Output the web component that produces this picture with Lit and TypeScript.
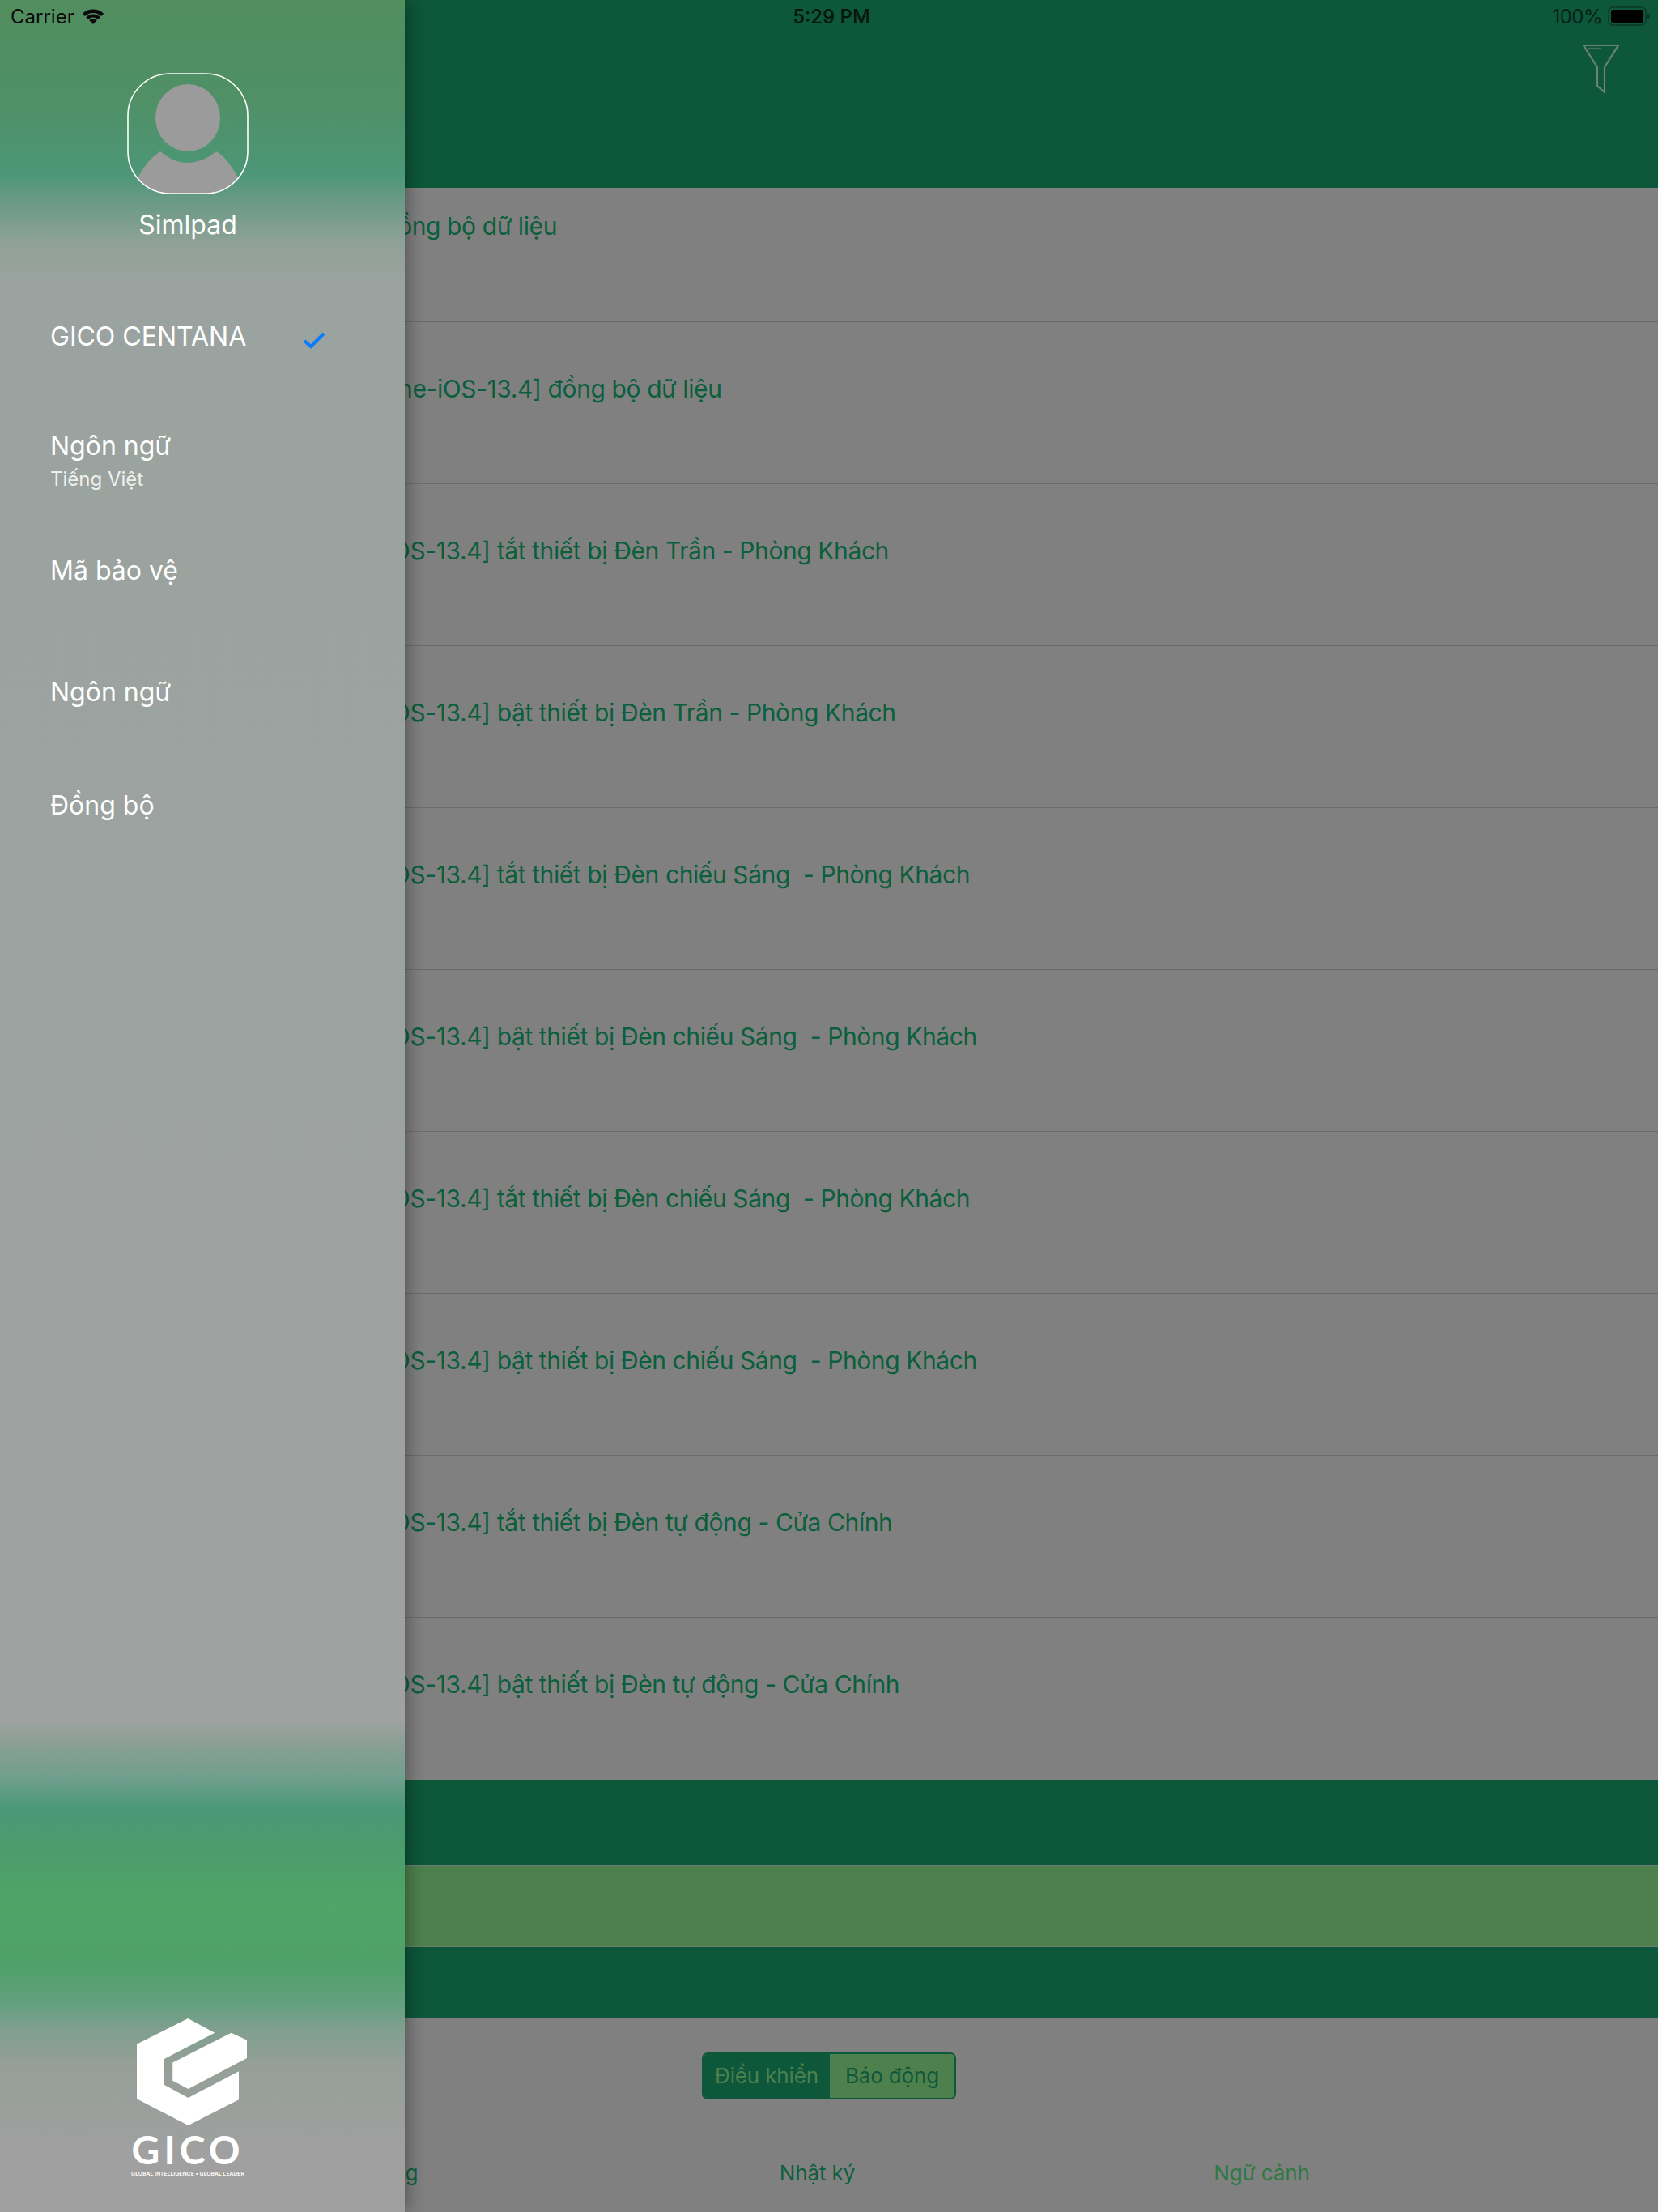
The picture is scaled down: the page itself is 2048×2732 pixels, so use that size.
import { LitElement, html, css } from "lit";
import { customElement } from "lit/decorators.js";

const ROWS: string[] = [
  "[iPhone-iOS-13.4] đồng bộ dữ liệu",
  "[iPad-iOS-13.4] tắt thiết bị Đèn Trần - Phòng Khách",
  "[iPad-iOS-13.4] bật thiết bị Đèn Trần - Phòng Khách",
  "[iPad-iOS-13.4] tắt thiết bị Đèn chiếu Sáng  - Phòng Khách",
  "[iPad-iOS-13.4] bật thiết bị Đèn chiếu Sáng  - Phòng Khách",
  "[iPad-iOS-13.4] tắt thiết bị Đèn chiếu Sáng  - Phòng Khách",
  "[iPad-iOS-13.4] bật thiết bị Đèn chiếu Sáng  - Phòng Khách",
  "[iPad-iOS-13.4] tắt thiết bị Đèn tự động - Cửa Chính",
  "[iPad-iOS-13.4] bật thiết bị Đèn tự động - Cửa Chính",
];

@customElement("app-root")
export class AppRoot extends LitElement {
  static styles = css`
    :host {
      display: block;
      position: relative;
      width: 2048px;
      height: 2732px;
      overflow: hidden;
      background: #808080;
      font-family: Inter, "Noto Sans", sans-serif;
    }
    .main {
      display: flex;
      flex-direction: column;
      height: 2732px;
    }
    .header {
      height: 232px;
      flex: none;
      background: #0d573a;
      display: flex;
      justify-content: flex-end;
      padding: 54px 47px 0 0;
      box-sizing: border-box;
    }
    .filter {
      width: 46px;
      height: 62px;
    }
    .row {
      height: 200px;
      flex: none;
      box-sizing: border-box;
      border-bottom: 1.5px solid #6b6b6b;
      padding: 64px 0 0 393px;
      font-size: 30px;
      letter-spacing: -0.4px;
      line-height: 36px;
      color: #0b5f3d;
      white-space: pre;
    }
    .row.first {
      height: 166px;
      padding: 29px 0 0 384px;
    }
    .row.wide {
      padding-left: 421px;
    }
    .row.last {
      border-bottom: none;
    }
    .bar {
      flex: none;
      background: #0d573a;
    }
    .bar.a {
      height: 106px;
      border-bottom: 1px solid #6d7d72;
    }
    .bar.b {
      height: 99px;
      background: #4e804e;
      border-bottom: 1px solid #6d7d72;
    }
    .bar.c {
      height: 88px;
    }
    .controls {
      display: flex;
      justify-content: center;
      padding: 42px 0 0 0;
      height: 58px;
      flex: none;
    }
    .segment {
      display: flex;
      width: 314px;
      height: 58px;
      box-sizing: border-box;
      border: 2px solid #0d573a;
      border-radius: 7px;
      overflow: hidden;
      font-size: 26px;
      letter-spacing: -0.15px;
    }
    .segment div {
      display: flex;
      align-items: center;
      justify-content: center;
      padding-bottom: 2px;
    }
    .seg-on {
      width: 156px;
      background: #0d573a;
      color: #4e804e;
    }
    .seg-off {
      flex: 1;
      background: #4e804e;
      color: #0d573a;
    }
    .tabs {
      display: grid;
      grid-template-columns: repeat(3, 549px);
      padding: 73px 0 0 186px;
      font-size: 26px;
      letter-spacing: -0.1px;
      line-height: 36px;
      text-align: center;
    }
    .tab1 {
      color: #0f6040;
    }
    .tab3 {
      color: #2f7a40;
    }
    .drawer {
      position: absolute;
      left: 0;
      top: 0;
      width: 500px;
      height: 2732px;
      box-shadow: 0 0 24px rgba(0, 0, 0, 0.45);
      background: linear-gradient(
        180deg,
        #528e5e 0,
        #4f9067 130px,
        #4c9777 215px,
        #6b9a86 250px,
        #8fa198 300px,
        #9aa39f 345px,
        #9fa2a0 2125px,
        #8a9f95 2155px,
        #709f8e 2195px,
        #4b9878 2235px,
        #4d9b6c 2280px,
        #4fa468 2350px,
        #4fa06a 2430px,
        #64a080 2475px,
        #7f9f8f 2505px,
        #959f98 2550px,
        #a0a0a0 2660px
      );
      color: #fff;
      display: flex;
      flex-direction: column;
    }
    .profile {
      display: flex;
      flex-direction: column;
      align-items: center;
      padding-top: 90px;
      width: 464px;
    }
    .avatar {
      width: 150px;
      height: 150px;
    }
    .name {
      font-size: 32px;
      line-height: 40px;
      margin-top: 18px;
    }
    .menu {
      padding-left: 62px;
      flex: 1;
      font-size: 32px;
      line-height: 40px;
    }
    .item {
      position: relative;
    }
    .item.company {
      margin-top: 98px;
    }
    .item.lang {
      margin-top: 95px;
    }
    .item.code {
      margin-top: 79px;
    }
    .item.lang2 {
      margin-top: 110px;
    }
    .item.sync {
      margin-top: 100px;
    }
    .sub {
      font-size: 24px;
      line-height: 28px;
      margin-top: 7px;
      color: #eef0ee;
    }
    .check {
      position: absolute;
      left: 312px;
      top: 13px;
      width: 28px;
      height: 22px;
    }
    .brand {
      display: flex;
      flex-direction: column;
      align-items: center;
      width: 464px;
      padding-bottom: 42px;
    }
    .mark {
      width: 136px;
      height: 132px;
      margin-left: 9px;
    }
    .word {
      font-family: Lato, Inter, sans-serif;
      font-weight: 700;
      font-size: 48px;
      line-height: 40px;
      letter-spacing: 5px;
      margin-top: 10px;
    }
    .tag {
      font-size: 6.8px;
      font-weight: 600;
      line-height: 10px;
      margin-top: 5px;
      white-space: nowrap;
    }
    .status {
      position: absolute;
      left: 0;
      top: 0;
      width: 2048px;
      height: 40px;
      display: flex;
      align-items: center;
      box-sizing: border-box;
      padding: 0 8px 0 13px;
      font-size: 24px;
      color: #0a0a0a;
    }
    .status .wifi {
      width: 30px;
      height: 22px;
      margin-left: 8px;
    }
    .status .time {
      position: absolute;
      left: 0;
      right: 0;
      padding-left: 6px;
      text-align: center;
      font-weight: 500;
      color: #05150f;
    }
    .status .right {
      margin-left: auto;
      display: flex;
      align-items: center;
      gap: 7px;
      position: relative;
      color: #06201a;
      letter-spacing: -0.5px;
    }
    .batt {
      width: 54px;
      height: 24px;
    }
  `;

  render() {
    return html`
      <div class="main">
        <div class="header">
          <svg class="filter" viewBox="0 0 46 62" fill="none" stroke="#6d8276" stroke-width="2.2">
            <path d="M1 2H44L27 29V60L18 52V29Z" />
            <path d="M6 6H22" stroke-opacity=".6" />
          </svg>
        </div>
        <div class="row first">[iPad] đồng bộ dữ liệu</div>
        ${ROWS.map(
          (text, i) =>
            html`<div class="row ${i === 0 ? "wide" : ""} ${i === ROWS.length - 1 ? "last" : ""}">${text}</div>`,
        )}
        <div class="bar a"></div>
        <div class="bar b"></div>
        <div class="bar c"></div>
        <div class="controls">
          <div class="segment">
            <div class="seg-on">Điều khiển</div>
            <div class="seg-off">Báo động</div>
          </div>
        </div>
        <div class="tabs">
          <div class="tab1">Hệ thống</div>
          <div class="tab1">Nhật ký</div>
          <div class="tab3">Ngữ cảnh</div>
        </div>
      </div>

      <aside class="drawer">
        <div class="profile">
          <svg class="avatar" viewBox="0 0 150 150">
            <defs>
              <clipPath id="av"><rect x="1" y="1" width="148" height="148" rx="52" /></clipPath>
            </defs>
            <g clip-path="url(#av)" fill="#9b9b9b">
              <ellipse cx="75" cy="55.5" rx="40" ry="41.5" />
              <path d="M41 97C52 106 63 111 75 111S99 106 110 97C122 104 130 116 138 132V150H12V132C20 116 29 105 41 97Z" />
            </g>
            <rect x="1" y="1" width="148" height="148" rx="52" fill="none" stroke="#fff" stroke-width="1.6" />
          </svg>
          <div class="name">Simlpad</div>
        </div>
        <div class="menu">
          <div class="item company">
            GICO CENTANA
            <svg class="check" viewBox="0 0 28 22"><path d="M2 12L10 19L26 3" fill="none" stroke="#0a7aff" stroke-width="4" /></svg>
          </div>
          <div class="item lang">
            Ngôn ngữ
            <div class="sub">Tiếng Việt</div>
          </div>
          <div class="item code">Mã bảo vệ</div>
          <div class="item lang2">Ngôn ngữ</div>
          <div class="item sync">Đồng bộ</div>
        </div>
        <div class="brand">
          <svg class="mark" viewBox="470 285 381 395" preserveAspectRatio="none" fill="#fff">
            <path d="M647 285L740 338L564 435V530L648 578L823 480V585L648 680L470 582V380Z" />
            <path d="M797 338L851 365V432L648 545L594 515V448Z" />
          </svg>
          <div class="word">GICO</div>
          <div class="tag">GLOBAL INTELLIGENCE • GLOBAL LEADER</div>
        </div>
      </aside>

      <div class="status">
        <span>Carrier</span>
        <svg class="wifi" viewBox="0 0 30 22">
          <path d="M15 21L10.2 16A7 7 0 0 1 19.8 16Z" fill="#0a0a0a" />
          <path d="M6.2 12.2A12.5 12.5 0 0 1 23.8 12.2L21 15A8.6 8.6 0 0 0 9 15Z" fill="#0a0a0a" />
          <path d="M1.8 7.9A18.6 18.6 0 0 1 28.2 7.9L25 11A14.2 14.2 0 0 0 5 11Z" fill="#0a0a0a" />
        </svg>
        <span class="time">5:29 PM</span>
        <div class="right">
          <span>100%</span>
          <svg class="batt" viewBox="0 0 54 24">
            <rect x="1" y="1" width="46" height="22" rx="5" fill="none" stroke="#0a3a28" stroke-width="1.5" />
            <rect x="4" y="4" width="40" height="16" rx="2.5" fill="#000" />
            <path d="M49 8C51 9 52 10.5 52 12S51 15 49 16Z" fill="#0a3a28" />
          </svg>
        </div>
      </div>
    `;
  }
}
